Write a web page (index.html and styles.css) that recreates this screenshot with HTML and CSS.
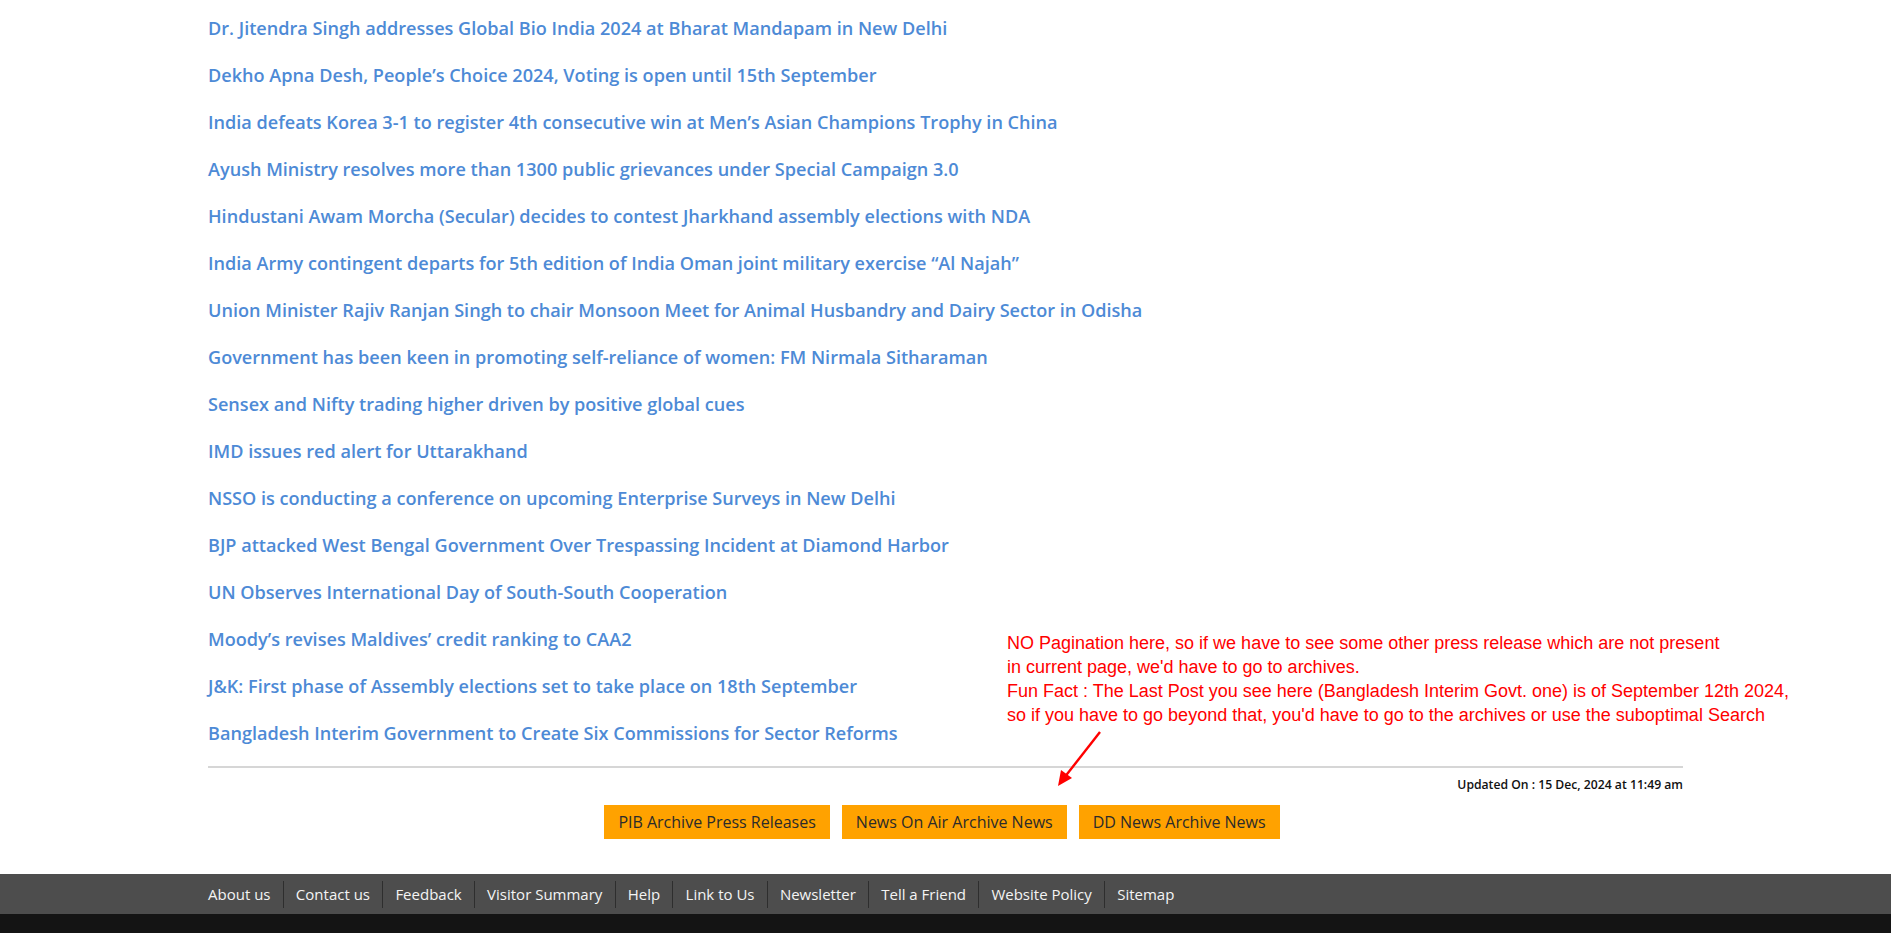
FILE: index.html
```html
<!DOCTYPE html>
<html lang="en">
<head>
<meta charset="utf-8">
<title>Press Releases</title>
<link rel="stylesheet" href="styles.css">
</head>
<body>
<div class="main">
  <ul class="news">
    <li><a href="#">Dr. Jitendra Singh addresses Global Bio India 2024 at Bharat Mandapam in New Delhi</a></li>
    <li><a href="#">Dekho Apna Desh, People’s Choice 2024, Voting is open until 15th September</a></li>
    <li><a href="#">India defeats Korea 3-1 to register 4th consecutive win at Men’s Asian Champions Trophy in China</a></li>
    <li><a href="#">Ayush Ministry resolves more than 1300 public grievances under Special Campaign 3.0</a></li>
    <li><a href="#">Hindustani Awam Morcha (Secular) decides to contest Jharkhand assembly elections with NDA</a></li>
    <li><a href="#">India Army contingent departs for 5th edition of India Oman joint military exercise “Al Najah”</a></li>
    <li><a href="#">Union Minister Rajiv Ranjan Singh to chair Monsoon Meet for Animal Husbandry and Dairy Sector in Odisha</a></li>
    <li><a href="#">Government has been keen in promoting self-reliance of women: FM Nirmala Sitharaman</a></li>
    <li><a href="#">Sensex and Nifty trading higher driven by positive global cues</a></li>
    <li><a href="#">IMD issues red alert for Uttarakhand</a></li>
    <li><a href="#">NSSO is conducting a conference on upcoming Enterprise Surveys in New Delhi</a></li>
    <li><a href="#">BJP attacked West Bengal Government Over Trespassing Incident at Diamond Harbor</a></li>
    <li><a href="#">UN Observes International Day of South-South Cooperation</a></li>
    <li><a href="#">Moody’s revises Maldives’ credit ranking to CAA2</a></li>
    <li><a href="#">J&amp;K: First phase of Assembly elections set to take place on 18th September</a></li>
    <li><a href="#">Bangladesh Interim Government to Create Six Commissions for Sector Reforms</a></li>
  </ul>
  <div class="rule"></div>
  <div class="updated">Updated On : 15 Dec, 2024 at 11:49 am</div>
  <div class="archives">
    <a class="btn" href="#">PIB Archive Press Releases</a>
    <a class="btn" href="#">News On Air Archive News</a>
    <a class="btn" href="#">DD News Archive News</a>
  </div>

  <div class="note">NO Pagination here, so if we have to see some other press release which are not present<br>in current page, we'd have to go to archives.<br>Fun Fact : The Last Post you see here (Bangladesh Interim Govt. one) is of September 12th 2024,<br>so if you have to go beyond that, you'd have to go to the archives or use the suboptimal Search</div>
  <svg class="arrow" width="60" height="66" viewBox="0 0 60 66">
    <line x1="50" y1="6" x2="14" y2="52" stroke="#ff0000" stroke-width="2.4"/>
    <polygon points="8,60 11,44 22,52" fill="#ff0000"/>
  </svg>
</div>

<footer class="footer">
  <nav class="footer-nav">
    <a href="#">About us</a>
    <a href="#">Contact us</a>
    <a href="#">Feedback</a>
    <a href="#">Visitor Summary</a>
    <a href="#">Help</a>
    <a href="#">Link to Us</a>
    <a href="#">Newsletter</a>
    <a href="#">Tell a Friend</a>
    <a href="#">Website Policy</a>
    <a href="#">Sitemap</a>
  </nav>
  <div class="footer-bottom"></div>
</footer>
</body>
</html>
```

FILE: styles.css
```css
html, body {
  margin: 0;
  padding: 0;
  background: #ffffff;
}
body {
  font-family: "Open Sans", "Noto Sans", sans-serif;
}
.main {
  position: relative;
  width: 1475px;
  margin: 0 auto;
  padding-top: 5px;
}
.news {
  list-style: none;
  margin: 0;
  padding: 0;
}
.news li {
  height: 47px;
  line-height: 47px;
  font-size: 18.1px;
  font-weight: 600;
  white-space: nowrap;
}
.news a {
  color: #4d8ad6;
  text-decoration: none;
}
.rule {
  margin-top: 9px;
  height: 2px;
  background: #d6d6d6;
}
.updated {
  margin-top: 8px;
  text-align: right;
  font-size: 12.2px;
  line-height: 18px;
  font-weight: 600;
  color: #111111;
}
.archives {
  margin-top: 11px;
  display: flex;
  justify-content: center;
  gap: 12px;
  padding-right: 7px;
}
.btn {
  display: flex;
  align-items: center;
  height: 34px;
  padding: 0 14px;
  background: #ffa200;
  color: #2b2b2b;
  font-size: 16px;
  text-decoration: none;
}
.note {
  position: absolute;
  left: 799px;
  top: 631px;
  font-family: "Liberation Sans", Arial, sans-serif;
  font-size: 18px;
  line-height: 24px;
  color: #ff0000;
  white-space: nowrap;
}
.arrow {
  position: absolute;
  left: 842px;
  top: 726px;
}
.footer {
  margin-top: 35px;
}
.footer-nav {
  background: #4d4d4d;
  height: 40px;
  display: flex;
  align-items: center;
  padding: 0 calc((100% - 1475px) / 2);
}
.footer-nav a {
  color: #f4f4f4;
  font-size: 15px;
  text-decoration: none;
  padding: 0 12.2px 0 12.2px;
  line-height: 27px;
  border-left: 1px solid #2e2e2e;
}
.footer-nav a:first-child {
  padding-left: 0;
  border-left: none;
}
.footer-bottom {
  background: #141414;
  height: 40px;
}
```
